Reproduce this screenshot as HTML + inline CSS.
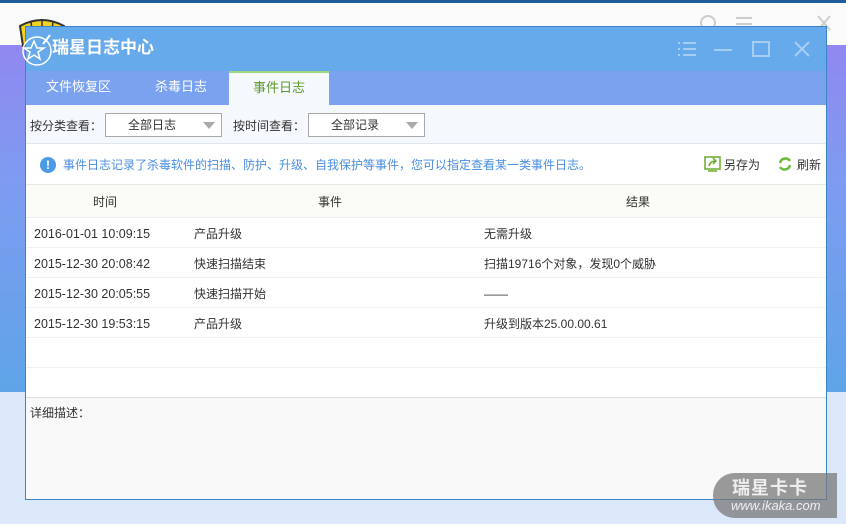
<!DOCTYPE html>
<html><head><meta charset="utf-8"><style>
*{margin:0;padding:0;box-sizing:border-box}
body{width:846px;height:524px;overflow:hidden;position:relative;font-family:"Liberation Sans","Noto Sans CJK SC",sans-serif;font-size:12px;line-height:16px;color:#333;background:#dce9fa}
.abs{position:absolute;line-height:16px}
</style></head><body>
<div class="abs" style="left:0;top:0;width:846px;height:3px;background:#1f5a9a"></div>
<div class="abs" style="left:0;top:3px;width:846px;height:42px;background:#fafafa"></div>
<div class="abs" style="left:0;top:45px;width:846px;height:347px;background:linear-gradient(180deg,#9088f0 0%,#7d9cf0 40%,#5fa4e8 100%)"></div>
<div class="abs" style="left:0;top:392px;width:846px;height:132px;background:#dae8fa"></div>
<svg class="abs" style="left:690px;top:10px" width="150" height="30"><circle cx="18" cy="13" r="7" fill="none" stroke="#ccc" stroke-width="2"/><g stroke="#ccc" stroke-width="2"><line x1="46" y1="8" x2="62" y2="8"/><line x1="46" y1="14" x2="62" y2="14"/><line x1="46" y1="20" x2="62" y2="20"/><line x1="86" y1="20" x2="100" y2="20"/><line x1="128" y1="6" x2="140" y2="20"/><line x1="140" y1="6" x2="128" y2="20"/></g></svg>
<svg class="abs" style="left:17px;top:16px" width="50" height="40"><path d="M3 10 Q25 -2 47 10 L44 30 L6 30Z" fill="#f4d11c" stroke="#333" stroke-width="2"/><g stroke="#333" stroke-width="1.5"><line x1="14" y1="6" x2="16" y2="22"/><line x1="25" y1="3" x2="25" y2="22"/><line x1="36" y1="6" x2="34" y2="22"/></g></svg>
<div class="abs" style="left:25px;top:26px;width:802px;height:474px;background:#fff;border:1px solid #3a84c8">
 <div class="abs" style="left:0;top:0;width:800px;height:44px;background:#66aaec"></div>
 <svg class="abs" style="left:-6px;top:4px" width="40" height="40"><circle cx="17" cy="20" r="14" fill="none" stroke="#fff" stroke-width="1.5"/><path d="M14 10 L17 17 L24 17 L18 21 L20 28 L14 24 L8 28 L10 21 L4 17 L11 17Z" fill="none" stroke="#fff" stroke-width="1.5"/><line x1="23" y1="13" x2="30" y2="4" stroke="#fff" stroke-width="2"/></svg>
 <div class="abs" style="left:26px;top:10px;color:#fff;font-size:17px;line-height:22px;font-weight:bold">瑞星日志中心</div>
 <svg class="abs" style="left:648px;top:10px" width="150" height="26"><g stroke="#a8cdf3" stroke-width="2"><line x1="4" y1="6" x2="6" y2="6"/><line x1="9" y1="6" x2="22" y2="6"/><line x1="4" y1="12" x2="6" y2="12"/><line x1="9" y1="12" x2="22" y2="12"/><line x1="4" y1="18" x2="6" y2="18"/><line x1="9" y1="18" x2="22" y2="18"/><line x1="40" y1="13" x2="58" y2="13"/><rect x="79" y="5" width="16" height="14" fill="none"/><line x1="121" y1="5" x2="135" y2="19"/><line x1="135" y1="5" x2="121" y2="19"/></g></svg>
 <div class="abs" style="left:0;top:44px;width:800px;height:34px;background:#7aa2ee"></div>
 <div class="abs" style="left:0;top:52px;width:105px;text-align:center;color:#fff;font-size:13px">文件恢复区</div>
 <div class="abs" style="left:105px;top:52px;width:100px;text-align:center;color:#fff;font-size:13px">杀毒日志</div>
 <div class="abs" style="left:203px;top:44px;width:100px;height:34px;padding-top:7px;text-align:center;color:#5b9a2a;font-size:13px;background:#f5f9fe;border-top:2px solid #9fd87f">事件日志</div>
 <div class="abs" style="left:0;top:78px;width:800px;height:39px;background:#f5f9fe;border-bottom:1px solid #dfe6ee"></div>
 <div class="abs" style="left:4px;top:91px">按分类查看：</div>
 <div class="abs" style="left:79px;top:86px;width:117px;height:24px;border:1px solid #a9a9a9;background:#fff;padding:3px 0 0 22px">全部日志<span style="position:absolute;right:6px;top:8px;border:6px solid transparent;border-top:7px solid #aaa;border-bottom:0"></span></div>
 <div class="abs" style="left:207px;top:91px">按时间查看：</div>
 <div class="abs" style="left:282px;top:86px;width:117px;height:24px;border:1px solid #a9a9a9;background:#fff;padding:3px 0 0 22px">全部记录<span style="position:absolute;right:6px;top:8px;border:6px solid transparent;border-top:7px solid #aaa;border-bottom:0"></span></div>
 <div class="abs" style="left:14px;top:130px;width:16px;height:16px;border-radius:50%;background:#4b9ae6;color:#fff;font-weight:bold;text-align:center;font-size:12px">!</div>
 <div class="abs" style="left:37px;top:130px;color:#4a8ee0">事件日志记录了杀毒软件的扫描、防护、升级、自我保护等事件，您可以指定查看某一类事件日志。</div>
 <svg class="abs" style="left:678px;top:128px" width="18" height="18"><rect x="1" y="2" width="15" height="12" fill="none" stroke="#6aaa2a" stroke-width="1.5"/><line x1="4" y1="16" x2="13" y2="16" stroke="#6aaa2a" stroke-width="1.5"/><path d="M5 11 Q6 6 12 6 M9 3 L12 6 L9 9" fill="none" stroke="#6aaa2a" stroke-width="1.5"/></svg>
 <div class="abs" style="left:698px;top:130px">另存为</div>
 <svg class="abs" style="left:751px;top:129px" width="16" height="16"><path d="M3 7 A5.5 5.5 0 0 1 13 5 M13 9 A5.5 5.5 0 0 1 3 11" fill="none" stroke="#6aba3a" stroke-width="2.5"/></svg>
 <div class="abs" style="left:771px;top:130px">刷新</div>
 <div class="abs" style="left:0;top:157px;width:800px;height:34px;background:#fcfcf6;border-top:1px solid #e6e6e6;border-bottom:1px solid #eee"></div>
 <div class="abs" style="left:67px;top:167px">时间</div>
 <div class="abs" style="left:292px;top:167px">事件</div>
 <div class="abs" style="left:600px;top:167px">结果</div>
 <div class="abs" style="left:0;top:191px;width:800px">
  <div style="height:30px;border-bottom:1px solid #f0f0f0;position:relative"><span class="abs" style="left:8px;top:8px;font-size:12.5px">2016-01-01 10:09:15</span><span class="abs" style="left:168px;top:8px">产品升级</span><span class="abs" style="left:458px;top:8px">无需升级</span></div>
  <div style="height:30px;border-bottom:1px solid #f0f0f0;position:relative"><span class="abs" style="left:8px;top:8px;font-size:12.5px">2015-12-30 20:08:42</span><span class="abs" style="left:168px;top:8px">快速扫描结束</span><span class="abs" style="left:458px;top:8px">扫描19716个对象，发现0个威胁</span></div>
  <div style="height:30px;border-bottom:1px solid #f0f0f0;position:relative"><span class="abs" style="left:8px;top:8px;font-size:12.5px">2015-12-30 20:05:55</span><span class="abs" style="left:168px;top:8px">快速扫描开始</span><span class="abs" style="left:458px;top:8px">——</span></div>
  <div style="height:30px;border-bottom:1px solid #f0f0f0;position:relative"><span class="abs" style="left:8px;top:8px;font-size:12.5px">2015-12-30 19:53:15</span><span class="abs" style="left:168px;top:8px">产品升级</span><span class="abs" style="left:458px;top:8px">升级到版本25.00.00.61</span></div>
  <div style="height:30px;border-bottom:1px solid #f0f0f0"></div>
 </div>
 <div class="abs" style="left:0;top:370px;width:800px;height:102px;background:#f9f9f9;border-top:1px solid #ddd"></div>
 <div class="abs" style="left:4px;top:378px">详细描述：</div>
</div>
<div class="abs" style="left:713px;top:473px;width:124px;height:45px;background:rgba(120,120,120,.75);border-radius:22px 0 0 22px"></div>
<div class="abs" style="left:732px;top:478px;color:#eee;font-size:18px;line-height:20px;font-weight:bold;letter-spacing:1px">瑞星卡卡</div>
<div class="abs" style="left:731px;top:498px;color:#eee;font-size:13px;font-style:italic">www.ikaka.com</div>
</body></html>
